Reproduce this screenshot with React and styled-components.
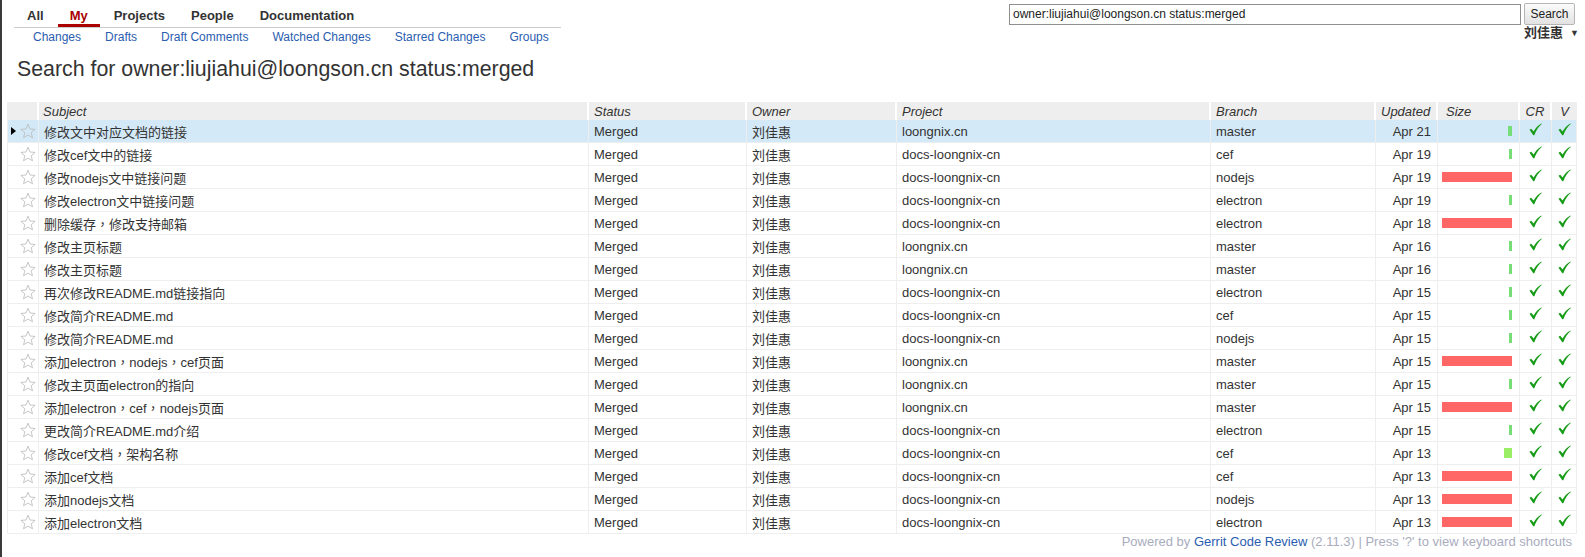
import React from "react";
import styled, { createGlobalStyle } from "styled-components";

const GlobalStyle = createGlobalStyle`
  html, body {
    margin: 0;
    padding: 0;
    background: #ffffff;
  }
  body {
    font-family: "Liberation Sans", Arial, "Noto Sans CJK SC", sans-serif;
    font-size: 13px;
    color: #333333;
  }
`;

const Page = styled.div`
  min-height: 100vh;
  box-sizing: border-box;
  border-left: 2px solid #3a3a3a;
`;

// Header: menus on the left, search on the right
const TopBar = styled.div`
  display: flex;
  justify-content: space-between;
  align-items: flex-start;
`;

const MenuBlock = styled.div`
  width: 547px;
  margin-left: 12px;
`;

const TopMenu = styled.div`
  display: flex;
  padding-top: 7px;
  padding-left: 1px;
  border-bottom: 1px solid #cccccc;
`;

const TopItem = styled.a`
  padding: 0 12px;
  margin-right: 2px;
  line-height: 17px;
  font-weight: bold;
  font-size: 13px;
  text-decoration: none;
  color: ${(p) => (p.$active ? "#aa0000" : "#333333")};
  border-bottom: 3px solid ${(p) => (p.$active ? "#aa0000" : "transparent")};
  cursor: pointer;
`;

const SubMenu = styled.div`
  display: flex;
  padding: 1px 0 0 7px;
`;

const SubItem = styled.a`
  padding: 0 12px;
  font-size: 12px;
  line-height: 16px;
  color: #2a5db0;
  text-decoration: none;
`;

const SearchBlock = styled.div`
  display: flex;
  flex-direction: column;
  align-items: flex-end;
  padding-top: 3px;
  padding-right: 10px;
`;

const SearchRow = styled.div`
  display: flex;
  align-items: center;
  gap: 3px;
`;

const SearchInput = styled.input`
  box-sizing: border-box;
  width: 512px;
  height: 21px;
  padding: 0 3px;
  border: 1px solid #8f8f8f;
  font-family: "Liberation Sans", Arial, sans-serif;
  font-size: 12px;
  color: #222222;
  outline: none;
`;

const SearchButton = styled.button`
  box-sizing: border-box;
  width: 51px;
  height: 22px;
  padding: 0;
  border: 1px solid #b5b5b5;
  border-radius: 2px;
  background: linear-gradient(#fbfbfb, #e2e2e2);
  font-family: "Liberation Sans", Arial, sans-serif;
  font-size: 12px;
  color: #222222;
`;

const UserMenu = styled.div`
  display: flex;
  align-items: center;
  gap: 7px;
  margin-top: 1px;
  margin-right: -4px;
  line-height: 14px;
  font-size: 13px;
  font-weight: bold;
  color: #333333;
`;

const Caret = styled.span`
  font-size: 9px;
  font-weight: normal;
`;

const Title = styled.h1`
  margin: 11px 0 0 15px;
  font-size: 21.33px;
  line-height: 26px;
  font-weight: normal;
  color: #333333;
`;

// Change table
const Table = styled.table`
  margin: 20px 0 0 5px;
  width: 1570px;
  table-layout: fixed;
  border-collapse: separate;
  border-spacing: 0;
`;

const Th = styled.th`
  height: 18px;
  padding: 0 ${(p) => (p.$align === "right" ? "6px" : "0")} 0
    ${(p) => (p.$pad ? p.$pad : "5px")};
  background: #eeeeee;
  border-right: 2px solid #ffffff;
  font-style: italic;
  font-weight: normal;
  font-size: 13px;
  color: #333333;
  text-align: ${(p) => p.$align || "left"};
  white-space: nowrap;

  &:last-child {
    border-right: none;
  }
`;

const Row = styled.tr`
  background: ${(p) => (p.$active ? "#d4e9f7" : "#ffffff")};
`;

const Td = styled.td`
  height: 22px;
  padding: 0 ${(p) => (p.$align === "right" ? "6px" : "0")} 0
    ${(p) => (p.$align === "left" || !p.$align ? "5px" : "0")};
  border-bottom: 1px solid #eeeeee;
  border-right: 1px solid #eeeeee;
  text-align: ${(p) => p.$align || "left"};
  vertical-align: middle;
  white-space: nowrap;
  overflow: hidden;
  color: #333333;

  &:first-child {
    border-left: 1px solid #eeeeee;
  }
`;

// full-width commas sit centred in the reference font
const Punct = styled.span`
  font-family: "Noto Sans CJK TC", sans-serif;
`;

const IconCell = styled.div`
  display: flex;
  align-items: center;
  gap: 4px;
  padding-left: 3px;
`;

const Pointer = styled.span`
  width: 0;
  height: 0;
  border-top: 4.5px solid transparent;
  border-bottom: 4.5px solid transparent;
  border-left: 5px solid ${(p) => (p.$show ? "#000000" : "transparent")};
`;

const SizeCell = styled.div`
  display: flex;
  justify-content: flex-end;
  align-items: center;
  padding-right: 7px;
`;

const SizeBar = styled.div`
  height: 10px;
  background: ${(p) => p.$color};
`;

const Link = styled.a`
  color: #2a5db0;
  text-decoration: none;
`;

const Footer = styled.div`
  margin-right: 13px;
  text-align: right;
  font-size: 13px;
  line-height: 16px;
  color: #a9acbd;
`;

const Star = () => (
  <svg width="16" height="16" viewBox="0 0 24 24">
    <path
      d="M12 1.8l3 7.2 7.7.6-5.9 5 1.9 7.6L12 18.1l-6.7 4.1 1.9-7.6-5.9-5 7.7-.6z"
      fill="none"
      stroke="#b9b9b9"
      strokeWidth="1.2"
      strokeLinejoin="miter"
    />
  </svg>
);

const Check = () => (
  <svg width="13" height="13" viewBox="0 0 13 13">
    <path
      d="M0.5 6.8 L2.2 5.8 L4.6 8.6 C6.6 4.9 9.2 2.1 12.4 0.4 L12.8 1.1 C9.8 3.4 7.3 7.1 5.3 12.2 L4.3 12.2 Z"
      fill="#169c16"
    />
  </svg>
);

const Subject = ({ text }) =>
  text.split(/(，)/).map((part, i) =>
    part === "，" ? <Punct key={i}>{part}</Punct> : part
  );

const BIG = { w: 70, c: "#ff6666" };
const THIN = { w: 3, c: "#77dd77" };

const changes = [
  ["修改文中对应文档的链接", "loongnix.cn", "master", "Apr 21", { w: 4, c: "#77dd77" }],
  ["修改cef文中的链接", "docs-loongnix-cn", "cef", "Apr 19", THIN],
  ["修改nodejs文中链接问题", "docs-loongnix-cn", "nodejs", "Apr 19", BIG],
  ["修改electron文中链接问题", "docs-loongnix-cn", "electron", "Apr 19", THIN],
  ["删除缓存，修改支持邮箱", "docs-loongnix-cn", "electron", "Apr 18", BIG],
  ["修改主页标题", "loongnix.cn", "master", "Apr 16", THIN],
  ["修改主页标题", "loongnix.cn", "master", "Apr 16", THIN],
  ["再次修改README.md链接指向", "docs-loongnix-cn", "electron", "Apr 15", THIN],
  ["修改简介README.md", "docs-loongnix-cn", "cef", "Apr 15", THIN],
  ["修改简介README.md", "docs-loongnix-cn", "nodejs", "Apr 15", THIN],
  ["添加electron，nodejs，cef页面", "loongnix.cn", "master", "Apr 15", BIG],
  ["修改主页面electron的指向", "loongnix.cn", "master", "Apr 15", THIN],
  ["添加electron，cef，nodejs页面", "loongnix.cn", "master", "Apr 15", BIG],
  ["更改简介README.md介绍", "docs-loongnix-cn", "electron", "Apr 15", THIN],
  ["修改cef文档，架构名称", "docs-loongnix-cn", "cef", "Apr 13", { w: 8, c: "#99ee66" }],
  ["添加cef文档", "docs-loongnix-cn", "cef", "Apr 13", BIG],
  ["添加nodejs文档", "docs-loongnix-cn", "nodejs", "Apr 13", BIG],
  ["添加electron文档", "docs-loongnix-cn", "electron", "Apr 13", BIG],
];

const App = () => {
  const query = "owner:liujiahui@loongson.cn status:merged";

  return (
    <Page>
      <GlobalStyle />
      <TopBar>
        <MenuBlock>
          <TopMenu>
            <TopItem>All</TopItem>
            <TopItem $active>My</TopItem>
            <TopItem>Projects</TopItem>
            <TopItem>People</TopItem>
            <TopItem>Documentation</TopItem>
          </TopMenu>
          <SubMenu>
            <SubItem>Changes</SubItem>
            <SubItem>Drafts</SubItem>
            <SubItem>Draft Comments</SubItem>
            <SubItem>Watched Changes</SubItem>
            <SubItem>Starred Changes</SubItem>
            <SubItem>Groups</SubItem>
          </SubMenu>
        </MenuBlock>

        <SearchBlock>
          <SearchRow>
            <SearchInput defaultValue={query} />
            <SearchButton>Search</SearchButton>
          </SearchRow>
          <UserMenu>
            <span>刘佳惠</span>
            <Caret>▼</Caret>
          </UserMenu>
        </SearchBlock>
      </TopBar>

      <Title>Search for {query}</Title>

      <Table>
        <colgroup>
          <col style={{ width: 32 }} />
          <col style={{ width: 550 }} />
          <col style={{ width: 158 }} />
          <col style={{ width: 150 }} />
          <col style={{ width: 314 }} />
          <col style={{ width: 165 }} />
          <col style={{ width: 62 }} />
          <col style={{ width: 82 }} />
          <col style={{ width: 32 }} />
          <col style={{ width: 25 }} />
        </colgroup>
        <thead>
          <tr>
            <Th />
            <Th $pad="4px">Subject</Th>
            <Th>Status</Th>
            <Th>Owner</Th>
            <Th>Project</Th>
            <Th>Branch</Th>
            <Th $align="right">Updated</Th>
            <Th $pad="8px">Size</Th>
            <Th $align="center" $pad="0">CR</Th>
            <Th $align="center" $pad="0">V</Th>
          </tr>
        </thead>
        <tbody>
          {changes.map(([subject, project, branch, updated, size], i) => (
            <Row key={i} $active={i === 0}>
              <Td $align="none">
                <IconCell>
                  <Pointer $show={i === 0} />
                  <Star />
                </IconCell>
              </Td>
              <Td>
                <Subject text={subject} />
              </Td>
              <Td>Merged</Td>
              <Td>刘佳惠</Td>
              <Td>{project}</Td>
              <Td>{branch}</Td>
              <Td $align="right">{updated}</Td>
              <Td $align="none">
                <SizeCell>
                  <SizeBar $color={size.c} style={{ width: size.w }} />
                </SizeCell>
              </Td>
              <Td $align="center">
                <Check />
              </Td>
              <Td $align="center">
                <Check />
              </Td>
            </Row>
          ))}
        </tbody>
      </Table>

      <Footer>
        Powered by <Link>Gerrit Code Review</Link> (2.11.3) | Press '?' to view
        keyboard shortcuts
      </Footer>
    </Page>
  );
};

export default App;
